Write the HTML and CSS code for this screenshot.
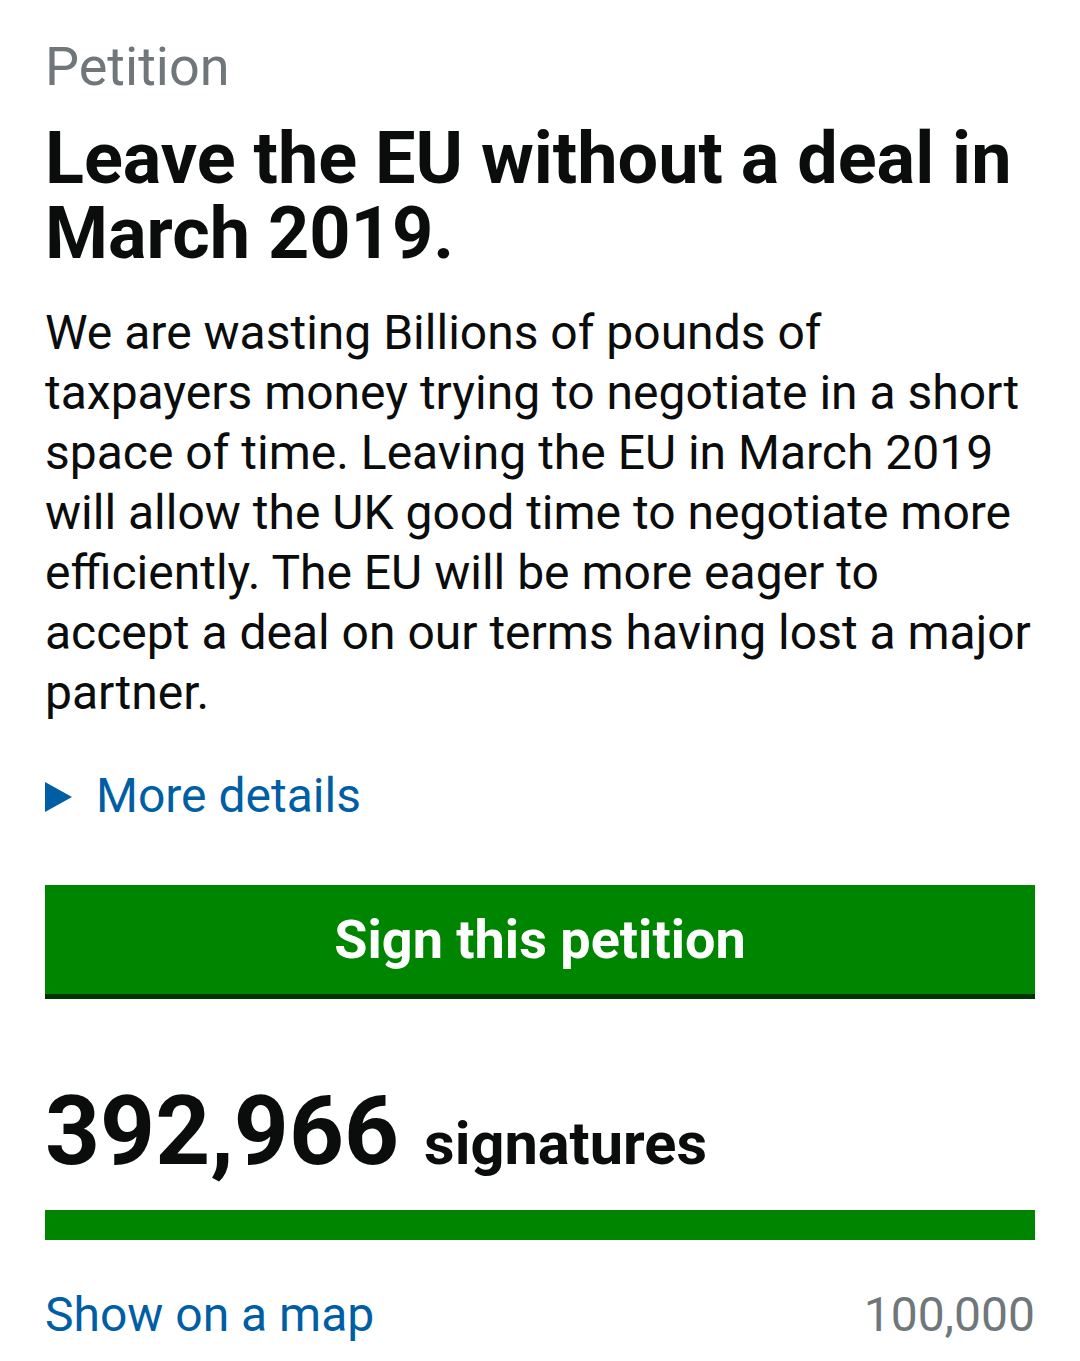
FILE: index.html
```html
<!DOCTYPE html>
<html lang="en">
<head>
<meta charset="utf-8">
<title>Petition</title>
<link rel="stylesheet" href="styles.css">
</head>
<body>
<main class="page">
  <p class="kicker">Petition</p>
  <h1 class="title">Leave the EU without a deal in March 2019.</h1>
  <p class="summary">We are wasting Billions of pounds of taxpayers money trying to negotiate in a short space of time. Leaving the EU in March 2019 will allow the UK good time to negotiate more efficiently. The EU will be more eager to accept a deal on our terms having lost a major partner.</p>
  <div class="details"><span class="arrow"></span><a class="link" href="#">More details</a></div>
  <a class="button" href="#">Sign this petition</a>
  <div class="count"><span class="num">392,966</span><span class="label">signatures</span></div>
  <div class="progress"><div class="fill" style="width:100%"></div></div>
  <div class="foot"><a class="link" href="#">Show on a map</a><span class="target">100,000</span></div>
</main>
</body>
</html>
```
FILE: styles.css
```css
html, body { margin: 0; padding: 0; background: #fff; }
body { font-family: Roboto, "Liberation Sans", sans-serif; color: #0b0c0c; }
.page { padding: 32px 45px 0 45px; }
.kicker { margin: 0; font-size: 54px; line-height: 70px; color: #6f777b; }
.title { margin: 19px 0 0 0; font-size: 72px; line-height: 75px; font-weight: 700; }
.summary { margin: 32px 0 0 0; font-size: 48px; line-height: 60px; }
.details { margin-top: 43px; display: flex; align-items: center; height: 60px; }
.arrow { width: 0; height: 0; border-left: 27px solid #005ea5; border-top: 15.5px solid transparent; border-bottom: 15.5px solid transparent; margin-right: 24px; margin-top: 2px; }
.link { color: #005ea5; text-decoration: none; font-size: 48px; line-height: 60px; }
.button { display: flex; align-items: center; justify-content: center; margin-top: 59px; height: 109px; background: #008500; border-bottom: 5px solid #003400; color: #fff; text-decoration: none; font-weight: 700; font-size: 54px; }
.count { margin-top: 82px; display: flex; align-items: baseline; height: 100px; line-height: 100px; }
.num { font-size: 96px; font-weight: 700; }
.label { font-size: 59.5px; font-weight: 700; margin-left: 25px; }
.progress { margin-top: 29px; height: 30px; background: #dee0e2; }
.fill { height: 100%; background: #008500; }
.foot { margin-top: 45px; display: flex; justify-content: space-between; align-items: baseline; }
.target { color: #6f777b; font-size: 48px; line-height: 60px; }
```
